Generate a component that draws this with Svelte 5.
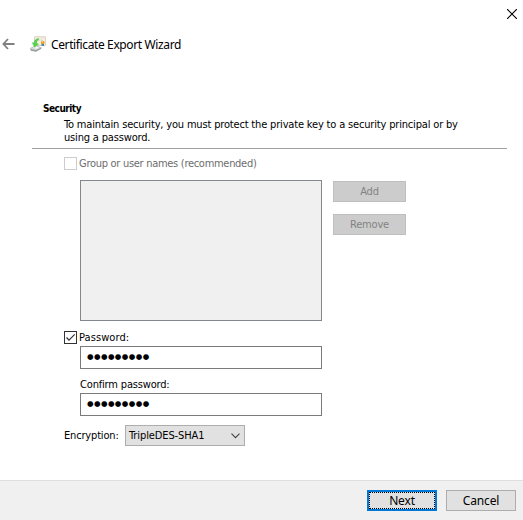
<script lang="ts">
	const mask = "●".repeat(9);

	let useGroup = $state(false);
	let usePassword = $state(true);
</script>

{#snippet checkbox(checked: boolean)}
	<svg width="13" height="13" viewBox="0 0 13 13" aria-hidden="true">
		<rect x="0.5" y="0.5" width="12" height="12" fill="#fff" stroke={checked ? "#333" : "#ccc"} />
		{#if checked}
			<path d="M2.5 6.5 5 9.2 10.7 3.3" fill="none" stroke="#333" stroke-width="1.2" />
		{/if}
	</svg>
{/snippet}

<div class="wizard">
	<div class="titlebar">
		<button class="close" type="button" aria-label="Close">
			<svg width="10" height="10" viewBox="0 0 10 10">
				<path d="M0 0 10 10M10 0 0 10" stroke="#000" stroke-width="1.15" />
			</svg>
		</button>
	</div>

	<header>
		<button class="back" type="button" aria-label="Back">
			<svg width="13" height="12" viewBox="0 0 13 12">
				<path d="M6 1 1.4 6 6 11M1.5 6H12.5" fill="none" stroke="#808080" stroke-width="1.8" />
			</svg>
		</button>
		<svg class="cert" width="16" height="16" viewBox="0 0 16 16" aria-hidden="true">
			<path d="M4.5 .8H15.4V9.5H4.5Z" fill="#f6f1e4" stroke="#ddd0bb" />
			<path d="M7 3H13M8 4.5H13" stroke="#e2dcd2" stroke-width=".8" />
			<path d="M.5 12.3 6 9.8 11.5 12 6 15.3 .8 14.4Z" fill="#d9dddd" stroke="#b0b4b4" stroke-width=".8" />
			<path d="M1 13.1 5.8 14 11 11.8V13.1L6 15.5 1 14.6Z" fill="#989d9d" />
			<path d="M3 11.5 6 10.2 9.3 11.5 6 12.8Z" fill="#f5f6f5" />
			<path d="M8.1 2.6C5.2 3.3 4.1 5.1 4.2 7.1L2.4 6.8 4.5 11.2 8.5 8.1 6.6 7.6C6.5 5.8 7.2 4.1 9 3.3Z" fill="#52d94b" stroke="#45bd42" stroke-width=".5" />
			<path d="M11.5 7H14V10.2L12.8 9.6 11.5 10.2Z" fill="#397fb0" />
			<circle cx="12.7" cy="6.5" r="1.8" fill="#ed9d20" />
			<circle cx="12.5" cy="6.1" r=".8" fill="#ffd05c" />
		</svg>
		<h1>Certificate Export Wizard</h1>
	</header>

	<main>
		<section class="intro">
			<h2>Security</h2>
			<p>
				To maintain security, you must protect the private key to a security principal or by<br />
				using a password.
			</p>
		</section>

		<div class="form">
			<button
				class="check group"
				type="button"
				role="checkbox"
				aria-checked={useGroup}
				disabled
				onclick={() => (useGroup = !useGroup)}
			>
				{@render checkbox(useGroup)}
				<span>Group or user names (recommended)</span>
			</button>

			<div class="principals">
				<div class="list"></div>
				<div class="list-actions">
					<button class="btn" type="button" disabled>Add</button>
					<button class="btn" type="button" disabled>Remove</button>
				</div>
			</div>

			<button
				class="check password"
				type="button"
				role="checkbox"
				aria-checked={usePassword}
				onclick={() => (usePassword = !usePassword)}
			>
				{@render checkbox(usePassword)}
				<span>Password:</span>
			</button>
			<div class="field"><span>{mask}</span></div>

			<div class="label">Confirm password:</div>
			<div class="field"><span>{mask}</span></div>

			<div class="encryption">
				<span class="caption">Encryption:</span>
				<button class="select" type="button">
					<span>TripleDES-SHA1</span>
					<svg width="9" height="6" viewBox="0 0 9 6" aria-hidden="true">
						<path d="M.5 .7 4.5 4.7 8.5 .7" fill="none" stroke="#444" stroke-width="1.1" />
					</svg>
				</button>
			</div>
		</div>
	</main>

	<footer>
		<button class="btn default" type="button"><span>Next</span></button>
		<button class="btn" type="button"><span>Cancel</span></button>
	</footer>
</div>

<style>
	:global(body) {
		margin: 0;
		background: #fff;
	}

	.wizard {
		display: flex;
		flex-direction: column;
		width: 523px;
		height: 520px;
		overflow: hidden;
		background: #fff;
		color: #000;
		font-family: "DejaVu Sans Condensed", "DejaVu Sans", sans-serif;
		font-stretch: condensed;
		font-size: 11px;
		line-height: 13px;
		letter-spacing: -0.17px;
		white-space: nowrap;
	}

	button {
		box-sizing: border-box;
		margin: 0;
		padding: 0;
		font: inherit;
		letter-spacing: inherit;
		color: inherit;
		background: none;
		border: none;
	}

	svg {
		display: block;
		flex: none;
	}

	.titlebar {
		display: flex;
		justify-content: flex-end;
		height: 21px;
		padding: 9px 6px 0 0;
	}

	.close {
		height: 10px;
	}

	header {
		display: flex;
		align-items: center;
		height: 28px;
		padding-left: 2px;
	}

	.cert {
		margin-left: 15px;
	}

	h1 {
		margin: 2px 0 0 5px;
		font: 12px/16px "Noto Sans", sans-serif;
		letter-spacing: -0.38px;
	}

	.intro {
		margin: 44px 16px 0 32px;
		padding-left: 11px;
		height: 46px;
		border-bottom: 1px solid #a0a0a0;
	}

	h2 {
		margin: 0;
		font-size: 10px;
		line-height: 13px;
		letter-spacing: -0.5px;
	}

	p {
		margin: 3px 0 0 21px;
	}

	.form {
		padding: 8px 0 0 64px;
	}

	.check {
		display: flex;
		align-items: center;
		gap: 2px;
		height: 13px;
	}

	.group {
		color: #6d6d6d;
		letter-spacing: -0.29px;
	}

	.principals {
		display: flex;
		gap: 11px;
		margin: 10px 0 0 16px;
	}

	.list {
		box-sizing: border-box;
		width: 242px;
		height: 141px;
		background: #f0f0f0;
		border: 1px solid #828790;
	}

	.list-actions {
		display: flex;
		flex-direction: column;
		gap: 12px;
		padding-top: 1px;
	}

	.btn {
		width: 73px;
		height: 21px;
		background: #e1e1e1;
		border: 1px solid #adadad;
	}

	.btn:disabled {
		color: #838383;
		background: #ccc;
		border-color: #bfbfbf;
	}

	.password {
		margin-top: 10px;
		letter-spacing: 0.08px;
	}

	.field {
		box-sizing: border-box;
		display: flex;
		align-items: center;
		width: 242px;
		height: 23px;
		margin: 2px 0 0 16px;
		padding: 0 0 2px 6px;
		border: 1px solid #7a7a7a;
		font-family: "DejaVu Sans", sans-serif;
		font-stretch: normal;
		font-size: 7.5px;
		letter-spacing: 0.42px;
	}

	.label {
		margin: 9px 0 0 16px;
	}

	.encryption {
		display: flex;
		align-items: center;
		margin-top: 9px;
	}

	.caption {
		width: 61px;
	}

	.select {
		display: flex;
		align-items: center;
		justify-content: space-between;
		width: 120px;
		height: 21px;
		padding: 0 4px 0 3px;
		background: #e1e1e1;
		border: 1px solid #adadad;
		letter-spacing: -0.1px;
	}

	footer {
		display: flex;
		gap: 9px;
		justify-content: flex-end;
		box-sizing: border-box;
		height: 40px;
		margin-top: auto;
		padding: 9px 7px 0 0;
		background: #f0f0f0;
		border-top: 1px solid #dfdfdf;
		font-family: "Noto Sans", sans-serif;
		font-size: 12px;
	}

	footer .btn {
		width: 70px;
	}

	.default {
		padding: 0;
		border: 2px solid #0078d7;
		outline: 1px dotted #000;
		outline-offset: -3px;
	}
</style>
